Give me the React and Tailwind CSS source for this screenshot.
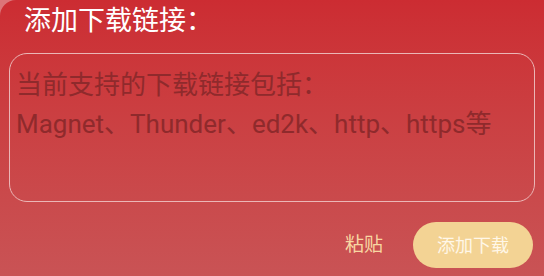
export default function App() {
  return (
    <div className="h-[276px] w-[544px] overflow-hidden bg-[#dc7478]">
      <div
        className="flex h-full flex-col rounded-tl-[16px] bg-gradient-to-b from-[#cc2c32] to-[#c95355] px-[9px]"
        style={{ fontFamily: "Roboto, 'Noto Sans CJK SC', sans-serif" }}
      >
        <h1 className="pl-[15px] pt-[3px] text-[27px] leading-[36px] text-white">添加下载链接：</h1>

        <div className="mt-[14px] h-[149px] rounded-[18px] border border-[#ebb6b6] px-[6px] pt-[12px] text-[26px] leading-[39px] text-[#8f2a2c]">
          <p>当前支持的下载链接包括：</p>
          <p>Magnet、Thunder、ed2k、http、https等</p>
        </div>

        <div className="mt-[20px] flex items-center justify-end gap-[30px] pr-[2px]">
          <button className="text-[19px] text-[#f8d7a2]">粘贴</button>
          <button className="h-[46px] w-[120px] rounded-full bg-[#f3d394] text-[18px] text-[#fff7e8]">
            添加下载
          </button>
        </div>
      </div>
    </div>
  );
}
